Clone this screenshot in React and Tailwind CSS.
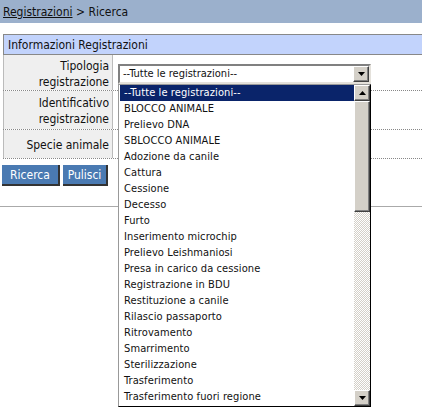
import { useState } from 'react';

const font = "font-['DejaVu_Sans_Condensed','Liberation_Sans',sans-serif]";

const opzioni = [
    '--Tutte le registrazioni--',
    'BLOCCO ANIMALE',
    'Prelievo DNA',
    'SBLOCCO ANIMALE',
    'Adozione da canile',
    'Cattura',
    'Cessione',
    'Decesso',
    'Furto',
    'Inserimento microchip',
    'Prelievo Leishmaniosi',
    'Presa in carico da cessione',
    'Registrazione in BDU',
    'Restituzione a canile',
    'Rilascio passaporto',
    'Ritrovamento',
    'Smarrimento',
    'Sterilizzazione',
    'Trasferimento',
    'Trasferimento fuori regione',
];

const Arrow = ({ up }) => (
    <svg width="7" height="4" viewBox="0 0 7 4" className="block">
        {up ? <path d="M3.5 0 L7 4 L0 4 Z" fill="#000" /> : <path d="M0 0 L7 0 L3.5 4 Z" fill="#000" />}
    </svg>
);

const ScrollBtn = ({ up, className = '' }) => (
    <div className={`h-[16px] w-[16px] flex items-center justify-center bg-[#d4d0c8] border border-t-white border-l-white border-r-[#404040] border-b-[#404040] shadow-[inset_-1px_-1px_#808080] ${className}`}>
        <Arrow up={up} />
    </div>
);

const Row = ({ label, h, children }) => (
    <div className={`flex border-b border-dotted border-[#888] ${h}`}>
        <div className="w-[110px] shrink-0 bg-[#efefef] border-l border-r border-[#bbb] flex items-center justify-end pr-[3px] text-right text-[12px] leading-[16px] pt-[2px]">
            {label}
        </div>
        <div className="flex-1 bg-white pl-[5px] flex items-center">{children}</div>
    </div>
);

export default function App() {
    const [selected] = useState(0);

    return (
        <div className={`w-[422px] h-[418px] bg-white text-[11px] text-[#111] overflow-hidden ${font}`}>
            <div className="h-[23px] bg-[#9bb0cc] flex items-center pl-[3px] text-[12px]">
                <a href="#" className="underline text-[#111]">Registrazioni</a>
                <span>&nbsp;&gt; Ricerca</span>
            </div>

            <div className="ml-[3px] mt-[11px] border-t border-[#888]">
                <div className="h-[20px] bg-[#c2d3fc] border-l border-b border-[#888] flex items-center pl-[4px] text-[12px]">
                    Informazioni Registrazioni
                </div>

                <div className="relative">
                    <Row h="h-[36px]" label={<span>Tipologia<br />registrazione</span>}>
                        <div className="relative w-[253px] h-[20px] mt-[3px] bg-white border-2 border-t-[#808080] border-l-[#808080] border-r-[#e4e1db] border-b-[#e4e1db] flex items-center justify-between">
                            <span className="pl-[3px]">--Tutte le registrazioni--</span>
                            <ScrollBtn className="h-[16px] w-[15px]" />
                        </div>
                    </Row>
                    <Row h="h-[39px]" label={<span>Identificativo<br />registrazione</span>} />
                    <Row h="h-[29px]" label="Specie animale" />

                    <div className="absolute left-[115px] top-[29px] w-[253px] h-[323px] bg-white border border-black border-l-[#999] border-t-[#999] flex z-10">
                        <div className="flex-1">
                            {opzioni.map((o, i) => (
                                <div
                                    key={o}
                                    className={`h-[16px] leading-[16px] pl-[4px] ml-[1px] whitespace-nowrap tracking-[0.1px] ${i === selected ? 'bg-[#0a246a] text-white' : ''}`}
                                >
                                    {o}
                                </div>
                            ))}
                        </div>
                        <div className="w-[16px] flex flex-col">
                            <ScrollBtn up />
                            <div className="h-[111px] bg-[#d4d0c8] border border-t-white border-l-white border-r-[#404040] border-b-[#404040] shadow-[inset_-1px_-1px_#808080]" />
                            <div className="flex-1 bg-[repeating-conic-gradient(#d4d0c8_0%_25%,#ffffff_0%_50%)] bg-size-[2px_2px]" />
                            <ScrollBtn />
                        </div>
                    </div>
                </div>
            </div>

            <div className="flex gap-[3px] pl-[2px] mt-[6px]">
                <button className="h-[21px] w-[58px] bg-[#4a7ab2] text-white border-r-2 border-b-2 border-[#333] text-[12px]">Ricerca</button>
                <button className="h-[21px] w-[45px] bg-[#4a7ab2] text-white border-r-2 border-b-2 border-[#333] text-[12px]">Pulisci</button>
            </div>

            <div className="mt-[20px] border-t border-[#aaa]" />
        </div>
    );
}
